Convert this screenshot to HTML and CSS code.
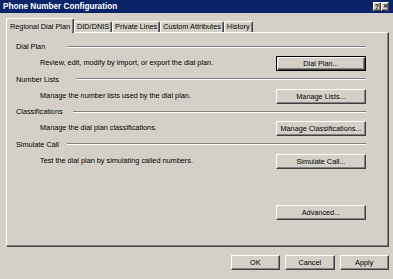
FILE: index.html
```html
<!DOCTYPE html>
<html lang="en">
<head>
  <meta charset="UTF-8" />
  <title>Phone Number Configuration</title>
  <link rel="stylesheet" href="styles.css">
</head>
<body>
  <div class="window">
    <div class="titlebar">
      <span class="title">Phone Number Configuration</span>
      <div class="caption-btns">
        <span class="cbtn">?</span>
        <span class="cbtn close">&#x2715;</span>
      </div>
    </div>

    <div class="content">
      <div class="tabs">
        <div class="tab active">Regional Dial Plan</div>
        <div class="tab">DID/DNIS</div>
        <div class="tab">Private Lines</div>
        <div class="tab">Custom Attributes</div>
        <div class="tab">History</div>
      </div>

      <div class="panel">
        <section class="group sec-dialplan">
          <div class="group-head"><span class="label">Dial Plan</span><span class="rule"></span></div>
          <div class="group-row">
            <p class="desc">Review, edit, modify by import, or export the dial plan.</p>
            <button class="btn wide default">Dial Plan...</button>
          </div>
        </section>

        <section class="group sec-lists">
          <div class="group-head"><span class="label">Number Lists</span><span class="rule"></span></div>
          <div class="group-row">
            <p class="desc">Manage the number lists used by the dial plan.</p>
            <button class="btn wide">Manage Lists...</button>
          </div>
        </section>

        <section class="group sec-class">
          <div class="group-head"><span class="label">Classifications</span><span class="rule"></span></div>
          <div class="group-row">
            <p class="desc">Manage the dial plan classifications.</p>
            <button class="btn wide">Manage Classifications...</button>
          </div>
        </section>

        <section class="group sec-sim">
          <div class="group-head"><span class="label">Simulate Call</span><span class="rule"></span></div>
          <div class="group-row">
            <p class="desc">Test the dial plan by simulating called numbers.</p>
            <button class="btn wide">Simulate Call...</button>
          </div>
        </section>

        <div class="advanced-row">
          <button class="btn wide">Advanced...</button>
        </div>
      </div>

      <div class="footer">
        <button class="btn small">OK</button>
        <button class="btn small">Cancel</button>
        <button class="btn small">Apply</button>
      </div>
    </div>
  </div>
</body>
</html>
```

FILE: styles.css
```css
body {
  margin: 0;
  background: #d4d0c8;
  font-family: "Liberation Sans", Arial, sans-serif;
  font-size: 7.3px;
  color: #000;
  overflow: hidden;
}
.window {
  width: 393px;
  height: 279px;
  display: flex;
  flex-direction: column;
}
.titlebar {
  height: 13px;
  background: #0a246a;
  display: flex;
  align-items: center;
  justify-content: space-between;
  padding: 0 4px 0 3px;
}
.title {
  color: #fff;
  font-weight: bold;
  font-size: 8.2px;
}
.caption-btns {
  display: flex;
}
.cbtn {
  width: 8px;
  height: 9px;
  box-sizing: border-box;
  background: #d4d0c8;
  border: 1px solid;
  border-color: #fff #404040 #404040 #fff;
  box-shadow: inset -1px -1px #808080;
  display: flex;
  align-items: center;
  justify-content: center;
  font-weight: bold;
  font-size: 7px;
  line-height: 1;
}
.cbtn.close {
  font-size: 5.5px;
}
.content {
  flex: 1;
  padding: 5px 4px 0 6px;
}
.tabs {
  display: flex;
  align-items: flex-end;
  height: 14px;
  position: relative;
  z-index: 1;
}
.tab {
  height: 11px;
  line-height: 10px;
  box-sizing: border-box;
  padding: 0 2px;
  border-top: 1px solid #fff;
  border-left: 1px solid #fff;
  border-right: 1px solid #404040;
  box-shadow: inset -1px 0 #808080;
  border-radius: 2px 2px 0 0;
  white-space: nowrap;
}
.tab.active {
  height: 15px;
  margin-bottom: -1px;
  padding-top: 3px;
  padding-left: 3px;
  padding-right: 3px;
  background: #d4d0c8;
}
.panel {
  height: 215px;
  box-sizing: border-box;
  border: 1px solid;
  border-color: #fff #404040 #404040 #fff;
  box-shadow: inset -1px -1px #808080;
  padding: 9px 22px 0 9px;
  display: flex;
  flex-direction: column;
}
.group + .group {
  margin-top: 3.5px;
}
.group-head {
  height: 9px;
  display: flex;
  align-items: center;
}
.label {
  white-space: nowrap;
}
.sec-dialplan .label { width: 51px; }
.sec-lists .label { width: 61px; }
.sec-class .label { width: 57px; }
.sec-sim .label { width: 51px; }
.rule {
  flex: 1;
  height: 0;
  border-top: 1px solid #808080;
  border-bottom: 1px solid #fff;
}
.group-row {
  margin-top: 5px;
  display: flex;
  align-items: center;
  justify-content: space-between;
}
.desc {
  margin: 0 0 2px 24px;
}
.btn {
  height: 15px;
  box-sizing: border-box;
  background: #d4d0c8;
  border: 1px solid;
  border-color: #fff #404040 #404040 #fff;
  box-shadow: inset -1px -1px #808080;
  font-family: inherit;
  font-size: 7.3px;
  color: #000;
  padding: 0;
}
.btn.default {
  border-color: #000;
  box-shadow: inset 1px 1px #fff, inset -1px -1px #404040, inset -2px -2px #808080;
}
.btn.wide {
  width: 90px;
}
.btn.small {
  width: 49.5px;
}
.advanced-row {
  margin-top: 36.5px;
  display: flex;
  justify-content: flex-end;
}
.footer {
  padding-top: 8px;
  display: flex;
  justify-content: flex-end;
  gap: 5px;
}
```
